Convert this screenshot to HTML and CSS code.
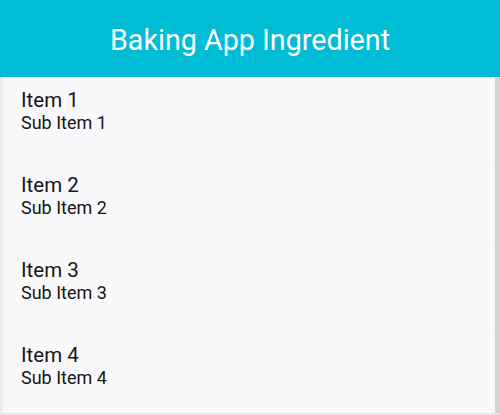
FILE: index.html
```html
<!DOCTYPE html>
<html>
<head>
<meta charset="utf-8">
<link rel="stylesheet" href="styles.css">
</head>
<body>
<div class="app">
  <header class="bar"><h1 class="title">Baking App Ingredient</h1></header>
  <div class="content">
    <ul class="list">
      <li class="row"><div class="primary">Item 1</div><div class="secondary">Sub Item 1</div></li>
      <li class="row"><div class="primary">Item 2</div><div class="secondary">Sub Item 2</div></li>
      <li class="row"><div class="primary">Item 3</div><div class="secondary">Sub Item 3</div></li>
      <li class="row"><div class="primary">Item 4</div><div class="secondary">Sub Item 4</div></li>
    </ul>
    <div class="scrollbar"></div>
  </div>
</div>
</body>
</html>
```
FILE: styles.css
```css
html, body { margin: 0; padding: 0; }
body {
  width: 500px;
  height: 415px;
  overflow: hidden;
  background: #f9f8fb;
  font-family: Roboto, "Noto Sans", sans-serif;
}
.app { display: flex; flex-direction: column; height: 415px; }
.bar {
  height: 77px;
  background: #00bcd4;
  display: flex;
  align-items: center;
  justify-content: center;
  flex: none;
}
.title {
  margin: 0;
  color: #ffffff;
  font-weight: 400;
  font-size: 28.7px;
  padding-top: 2px;
}
.content {
  flex: 1;
  display: flex;
  border-left: 3px solid #eceaee;
  border-bottom: 2px solid #e6e5e8;
  overflow: hidden;
}
.list {
  flex: 1;
  margin: 0;
  padding: 0;
  list-style: none;
}
.row {
  height: 85px;
  border-bottom: 1px solid #f4f3f6;
  padding: 12px 0 0 18px;
  box-sizing: border-box;
  color: #161616;
}
.primary { font-size: 20.5px; line-height: 23px; }
.secondary { font-size: 18px; line-height: 21px; }
.scrollbar { width: 5px; background: #d4d4d4; flex: none; }
```
